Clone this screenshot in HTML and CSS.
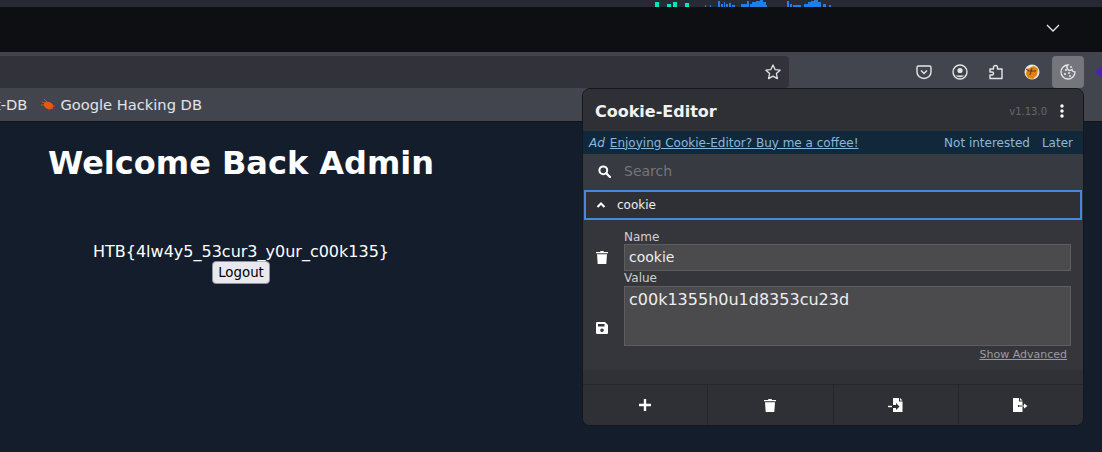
FILE: index.html
```html
<!DOCTYPE html>
<html lang="en">

<head>
    <meta charset="UTF-8">
    <title>Welcome Back Admin</title>
    <link rel="stylesheet" href="styles.css">
</head>

<body>
    <div class="topStrip">
        <svg class="activity" width="195" height="7" viewBox="0 0 195 7">
            <path fill="#00e6c3" d="M15 2h4v5h-4zM27 4h4v3h-4zM33 2h4v5h-4zM45 3h4v4h-4z" />
            <path fill="#1f7fe6" d="M65 5h1v2h-1zM70 5h1v2h-1zM78 1h2v6h-2zM81 4h2v3h-2zM84 2h1v5h-1zM86 4h2v3h-2zM89 3h2v4h-2zM92 5h3v2h-3zM101 4h6v3h-6zM107 1h2v6h-2zM110 4h2v3h-2zM112 2h4v5h-4zM116 1h4v6h-4zM120 0h3v7h-3zM123 2h3v5h-3zM126 5h1v2h-1zM147 1h2v6h-2zM150 4h2v3h-2zM153 5h8v2h-8zM164 4h4v3h-4zM168 2h3v5h-3zM171 1h3v6h-3zM174 0h4v7h-4zM178 2h3v5h-3zM183 4h3v3h-3zM189 5h2v2h-2z" />
        </svg>
    </div>

    <div class="tabBar">
        <svg class="chevron" width="14" height="8" viewBox="0 0 14 8">
            <path d="M1 1l6 6 6-6" fill="none" stroke="#e8e8ea" stroke-width="1.3" />
        </svg>
    </div>

    <div class="toolbar">
        <div class="urlBar">
            <svg width="18" height="18" viewBox="0 0 18 18">
                <path d="M9 2l2.1 4.6 5 .6-3.7 3.4 1 5L9 13.1 4.600 15.600l1-5L1.900 7.200l5-.6z" fill="none" stroke="#e2e2e5" stroke-width="1.3" stroke-linejoin="round" />
            </svg>
        </div>
        <div class="toolIcons">
            <button class="toolBtn">
                <svg width="16" height="16" viewBox="0 0 16 16">
                    <path d="M2.500 2h11a1.500 1.500 0 0 1 1.500 1.500V8a7 6.500 0 0 1-14 0V3.500A1.500 1.500 0 0 1 2.500 2z" fill="none" stroke="#e6e6e8" stroke-width="1.400" />
                    <path d="M5 6.500l3 3 3-3" fill="none" stroke="#e6e6e8" stroke-width="1.400" />
                </svg>
            </button>
            <button class="toolBtn">
                <svg width="16" height="16" viewBox="0 0 16 16">
                    <circle cx="8" cy="8" r="7" fill="none" stroke="#e6e6e8" stroke-width="1.400" />
                    <circle cx="8" cy="6.500" r="2.600" fill="#e6e6e8" />
                    <path d="M3.500 11.500h9a5 3 0 0 1-9 0z" fill="#e6e6e8" />
                </svg>
            </button>
            <button class="toolBtn">
                <svg width="16" height="16" viewBox="0 0 16 16">
                    <path d="M2 5h3.500V3.500a2 2 0 0 1 4 0V5H14v9.500H2v-3.500h2a1.500 1.500 0 0 0 0-3H2z" fill="none" stroke="#e6e6e8" stroke-width="1.400" stroke-linejoin="round" />
                </svg>
            </button>
            <button class="toolBtn">
                <svg width="16" height="16" viewBox="0 0 16 16">
                    <circle cx="8" cy="8" r="7.500" fill="#e8e4de" />
                    <path d="M3 5l7-3 4 3-1 6-4 4-5-1-2-4z" fill="#e08210" />
                    <path d="M5 7h7M8 4l-2 7M2 5l3 2" stroke="#5b3a12" stroke-width="1" fill="none" />
                </svg>
            </button>
            <button class="toolBtn toolBtnActive">
                <svg width="16" height="16" viewBox="0 0 16 16">
                    <path d="M8 1a7 7 0 1 0 7 7 3 3 0 0 1-3-2.500A3 3 0 0 1 8 1z" fill="none" stroke="#e6e6e8" stroke-width="1.300" />
                    <circle cx="6" cy="6" r="1.100" fill="#e6e6e8" />
                    <circle cx="5" cy="10" r="1.100" fill="#e6e6e8" />
                    <circle cx="9" cy="9" r="1" fill="#e6e6e8" />
                    <circle cx="10" cy="12" r="1" fill="#e6e6e8" />
                    <circle cx="11" cy="3" r="1" fill="#e6e6e8" />
                </svg>
            </button>
            <svg class="purpleIcon" width="10" height="16" viewBox="0 0 10 16">
                <path d="M10 0v16L0 8z" fill="#4c1fc0" />
            </svg>
        </div>
    </div>

    <div class="bookmarks">
        <span class="bookmark bookmarkCut">t-DB</span>
        <span class="bookmark">
            <svg width="14" height="12" viewBox="0 0 14 12">
                <ellipse cx="7.500" cy="6.500" rx="5" ry="3.500" transform="rotate(25 7.500 6.500)" fill="#e8590c" />
                <path d="M1 3l4 1M3 0l3 3M0 6l3 0M8 11l1-2M12 10l-1-2M14 7h-2" stroke="#c9531a" stroke-width="1" fill="none" />
            </svg>
            Google Hacking DB
        </span>
    </div>

    <main class="page">
        <div class="welcome">
            <h1>Welcome Back Admin</h1>
            <p class="flag">HTB{4lw4y5_53cur3_y0ur_c00k135}</p>
            <button class="logout">Logout</button>
        </div>
    </main>

    <div class="popup">
        <header class="popupHead">
            <span class="popupTitle">Cookie-Editor</span>
            <span class="version">v1.13.0</span>
            <svg width="4" height="14" viewBox="0 0 4 14">
                <circle cx="2" cy="2" r="1.700" fill="#fff" />
                <circle cx="2" cy="7" r="1.700" fill="#fff" />
                <circle cx="2" cy="12" r="1.700" fill="#fff" />
            </svg>
        </header>

        <div class="adBar">
            <em>Ad</em>
            <a class="adLink">Enjoying Cookie-Editor? Buy me a coffee!</a>
            <span class="adAction">Not interested</span>
            <span class="adAction">Later</span>
        </div>

        <div class="searchRow">
            <svg width="13" height="13" viewBox="0 0 13 13">
                <circle cx="5.300" cy="5.300" r="3.900" fill="none" stroke="#fff" stroke-width="2" />
                <path d="M8.200 8.200l3.800 3.800" stroke="#fff" stroke-width="2.200" stroke-linecap="round" />
            </svg>
            <span class="searchText">Search</span>
        </div>

        <div class="cookieRow">
            <svg width="10" height="6" viewBox="0 0 10 6">
                <path d="M1.500 5L5 1.500 8.500 5" fill="none" stroke="#fff" stroke-width="2" />
            </svg>
            <span>cookie</span>
        </div>

        <div class="cookieBody">
            <div class="sideIcons">
                <svg class="trashIcon" width="12" height="14" viewBox="0 0 12 14">
                    <path d="M0 2h4l.5-1h3l.5 1h4v1.300H0zM1 4.300h10L10.300 14H1.700z" fill="#fff" />
                </svg>
                <svg class="saveIcon" width="12" height="12" viewBox="0 0 12 12">
                    <path fill-rule="evenodd" d="M1.300 0H9l3 3v7.700A1.300 1.300 0 0 1 10.700 12H1.300A1.300 1.300 0 0 1 0 10.700V1.300A1.300 1.300 0 0 1 1.300 0zM2 2v2.500h6.500V2zM6 6.500a1.800 1.800 0 1 0 0 3.600 1.800 1.800 0 0 0 0-3.600z" fill="#fff" />
                </svg>
            </div>
            <div class="fields">
                <label>Name</label>
                <div class="nameInput">cookie</div>
                <label class="valueLabel">Value</label>
                <div class="valueInput">c00k1355h0u1d8353cu23d</div>
                <a class="showAdvanced">Show Advanced</a>
            </div>
        </div>

        <div class="listEnd"></div>

        <footer class="popupFoot">
            <button class="footBtn">
                <svg width="14" height="14" viewBox="0 0 14 14">
                    <path d="M5.800 1h2.400v4.800H13v2.400H8.200V13H5.800V8.200H1V5.800h4.800z" fill="#fff" />
                </svg>
            </button>
            <button class="footBtn">
                <svg width="12" height="14" viewBox="0 0 12 14">
                    <path d="M0 2h4l.5-1h3l.5 1h4v1.300H0zM1 4.300h10L10.300 14H1.700z" fill="#fff" />
                </svg>
            </button>
            <button class="footBtn">
                <svg width="15" height="14" viewBox="0 0 15 14">
                    <path d="M5 0h6v3.500h3.500V14H5v-4h3v2l3.500-3.500L8 5v2H5zM12 0l2.500 2.500H12z" fill="#fff" />
                    <path d="M0 7.800h4v1.400H0z" fill="#fff" />
                </svg>
            </button>
            <button class="footBtn">
                <svg width="15" height="14" viewBox="0 0 15 14">
                    <path d="M0 0h6v3.500h3.500V7H5v2h4.500v5H0zM7 0l2.500 2.500H7z" fill="#fff" />
                    <path d="M6 7.500h5V5.500l3.500 2.500-3.500 2.500v-2H6z" fill="#fff" />
                </svg>
            </button>
        </footer>
    </div>
</body>

</html>
```

FILE: styles.css
```css
* {
    box-sizing: border-box;
}

html,
body {
    height: 100%;
}

body {
    margin: 0;
    display: flex;
    flex-direction: column;
    overflow: hidden;
    font-family: "DejaVu Sans", sans-serif;
    background: #141d2b;
}

svg {
    display: block;
    flex: none;
}

button {
    font-family: inherit;
}

/* browser chrome */
.topStrip {
    height: 7px;
    background: #272a35;
    padding-left: 640px;
}

.tabBar {
    height: 45px;
    background: #0e0f13;
    display: flex;
    justify-content: flex-end;
    align-items: center;
    padding: 0 42px 3px 0;
}

.toolbar {
    height: 36px;
    background: #42454e;
    display: flex;
    padding-top: 4px;
}

.urlBar {
    flex: none;
    width: 789px;
    background: #32333a;
    border-radius: 0 4px 4px 0;
    display: flex;
    justify-content: flex-end;
    align-items: center;
    padding-right: 7px;
}

.toolIcons {
    flex: 1;
    display: flex;
    align-items: center;
    padding-left: 119px;
    gap: 4px;
}

.toolBtn {
    flex: none;
    width: 32px;
    height: 32px;
    padding: 0;
    border: 0;
    border-radius: 4px;
    background: transparent;
    display: flex;
    justify-content: center;
    align-items: center;
}

.toolBtnActive {
    background: #74767c;
}

.purpleIcon {
    margin-left: 7px;
}

.bookmarks {
    height: 34px;
    background: #42454e;
    border-bottom: 1px solid #101318;
    display: flex;
    align-items: center;
    gap: 14px;
    font-size: 14.67px;
    color: #e4e4e6;
    overflow: hidden;
}

.bookmark {
    display: flex;
    align-items: center;
    gap: 5px;
    white-space: nowrap;
}

.bookmarkCut {
    margin-left: -5px;
}

/* page under the popup */
.page {
    flex: 1;
    background: #141d2b;
    padding-left: 48px;
}

.welcome {
    width: 386px;
    text-align: center;
    color: #fff;
}

.welcome h1 {
    margin: 22px 0 0;
    font-size: 32px;
    line-height: 38px;
    text-align: left;
    white-space: nowrap;
}

.flag {
    margin: 60px 0 0;
    font-size: 16px;
    line-height: 19px;
}

.logout {
    display: block;
    margin: 0 auto;
    width: 58px;
    height: 23px;
    padding: 0;
    font-size: 13.33px;
    color: #000;
    background: #e9e9ed;
    border: 1px solid #8f8f9d;
    border-radius: 4px;
}

/* extension popup */
.popup {
    position: absolute;
    left: 582px;
    top: 88px;
    width: 502px;
    height: 338px;
    display: flex;
    flex-direction: column;
    background: #35363c;
    border: 1px solid #15171c;
    border-radius: 8px;
    overflow: hidden;
}

.popupHead {
    flex: none;
    height: 42px;
    background: #2f3035;
    display: flex;
    align-items: center;
    padding: 2px 19px 0 12px;
}

.popupTitle {
    flex: 1;
    font-size: 16px;
    font-weight: bold;
    color: #f2f2f3;
}

.version {
    font-size: 10px;
    color: #66676c;
    margin-right: 13px;
}

.adBar {
    flex: none;
    height: 23px;
    background: #11283b;
    display: flex;
    align-items: center;
    padding: 0 10px 0 6px;
    font-size: 12px;
    color: #86b9dc;
}

.adBar em {
    margin-right: 5px;
}

.adLink {
    flex: 1;
    text-decoration: underline;
}

.adAction {
    margin-left: 12px;
}

.searchRow {
    flex: none;
    height: 36px;
    background: #383a42;
    display: flex;
    align-items: center;
    padding: 0 0 2px 15px;
    gap: 13px;
    font-size: 14px;
    color: #73757b;
}

.cookieRow {
    flex: none;
    height: 30px;
    margin: 0 1px;
    background: #2f3035;
    border: 2px solid #4a86dd;
    display: flex;
    align-items: center;
    padding-left: 10px;
    gap: 11px;
    font-size: 12px;
    color: #eeeeef;
}

.cookieBody {
    flex: 1;
    display: flex;
    padding: 10px 12px 0 0;
}

.sideIcons {
    width: 41px;
    padding: 20px 0 0 13px;
}

.saveIcon {
    margin-top: 58px;
}

.fields {
    flex: 1;
    display: flex;
    flex-direction: column;
    font-size: 12px;
    color: #d0d0d2;
}

.fields label {
    line-height: 14px;
}

.fields .valueLabel {
    line-height: 15px;
}

.nameInput,
.valueInput {
    background: #4b4b4d;
    border: 1px solid #5e5e61;
    color: #eeeeef;
    padding: 0 4px;
}

.nameInput {
    height: 27px;
    font-size: 14px;
    line-height: 25px;
}

.valueInput {
    height: 60px;
    padding-top: 3px;
    font-size: 16px;
    line-height: 20px;
}

.showAdvanced {
    align-self: flex-end;
    margin: 2px 4px 0 0;
    font-size: 11px;
    color: #9c9ca0;
    text-decoration: underline;
}

.listEnd {
    flex: none;
    height: 14px;
    background: #303136;
}

.popupFoot {
    flex: none;
    height: 41px;
    display: flex;
    background: #2f3035;
    border-top: 1px solid #26272b;
}

.footBtn {
    flex: 1;
    padding: 0;
    border: 0;
    border-right: 1px solid #26272b;
    background: transparent;
    display: flex;
    justify-content: center;
    align-items: center;
}

.footBtn:last-child {
    border-right: 0;
}
```
